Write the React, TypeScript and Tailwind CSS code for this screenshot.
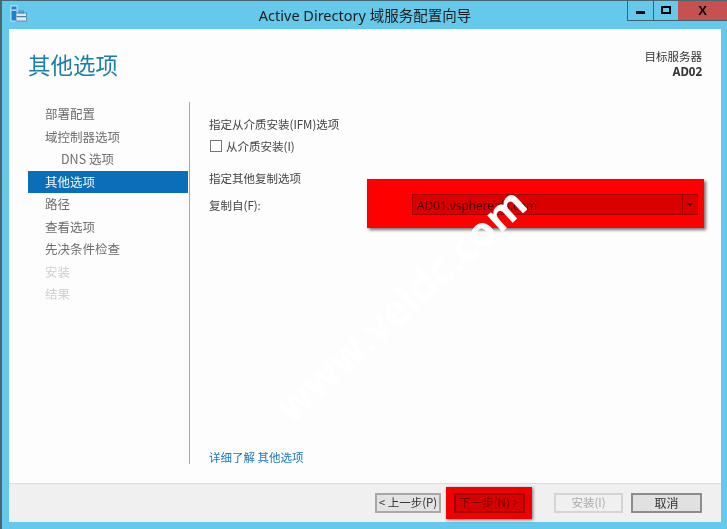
const items: [string, string][] = [
  ["部署配置", "text-[#6e6e6e] pl-[17px]"],
  ["域控制器选项", "text-[#6e6e6e] pl-[17px]"],
  ["DNS 选项", "text-[#6e6e6e] pl-[33px]"],
  ["其他选项", "bg-[#0a6fb8] text-[#f2f7fb] pl-[17px]"],
  ["路径", "text-[#6e6e6e] pl-[17px]"],
  ["查看选项", "text-[#6e6e6e] pl-[17px]"],
  ["先决条件检查", "text-[#6e6e6e] pl-[17px]"],
  ["安装", "text-[#cfcfcf] pl-[17px]"],
  ["结果", "text-[#cfcfcf] pl-[17px]"],
];

const font = "font-['Noto_Sans_CJK_SC','Noto_Sans',sans-serif]";

export default function App() {
  return (
    <div className={`relative w-[727px] h-[529px] overflow-hidden bg-[#64c9ea] ${font} border-l-2 border-t border-[#4a6670] blur-[0.35px]`}>
      {/* title bar */}
      <div className="relative flex h-[28px]">
        <svg className="ml-[8px] mt-[4px] shrink-0" width="18" height="18" viewBox="0 0 18 18">
          <rect x="1" y="1" width="6" height="15" fill="#1c7fd0" stroke="#e8f6ff" strokeWidth="0.8" />
          <rect x="1.5" y="4.5" width="5" height="1.2" fill="#e8f6ff" />
          <rect x="6" y="8" width="10.5" height="8" fill="#dfe8ee" stroke="#4f7f9b" strokeWidth="0.8" />
          <rect x="9" y="6" width="4.5" height="2" fill="none" stroke="#4f7f9b" strokeWidth="0.8" />
          <rect x="6.5" y="11" width="9.5" height="1.2" fill="#4f7f9b" />
        </svg>
        <div className="ml-[-18px] w-[710px] text-center text-[14.5px] leading-[28px] text-[#1c1c1c] font-['Noto_Sans','Noto_Sans_CJK_SC',sans-serif]">
          Active Directory 域服务配置向导
        </div>
        <div className="absolute right-0 top-[-1px] flex h-[21px] border-b border-[#44606a] border-l">
          <div className="flex w-[26px] items-center justify-center border-r border-[#44606a]">
            <div className="mt-[4px] h-[3px] w-[9px] bg-black" />
          </div>
          <div className="flex w-[24px] items-center justify-center">
            <div className="h-[8px] w-[10px] border-2 border-black" />
          </div>
          <div className="flex w-[49px] items-center justify-center bg-[#c75050] text-[13px] font-bold leading-none text-black font-['Liberation_Sans',sans-serif]">
            X
          </div>
        </div>
      </div>

      {/* client area */}
      <div className="ml-[7px] flex h-[493px] w-[712px] flex-col bg-[#fdfdfd]">
        <div className="flex h-[73px] shrink-0">
          <h1 className="ml-[19px] mt-[18px] text-[22.5px] leading-[34px] text-[#1c7ea8] font-normal">其他选项</h1>
          <div className="ml-auto mr-[19px] mt-[20px] text-right text-[11.5px] leading-[15px] text-[#333]">
            <div>目标服务器</div>
            <div className="font-bold font-['Noto_Sans',sans-serif]">AD02</div>
          </div>
        </div>

        <div className="flex h-[362px] shrink-0">
          <nav className="ml-[19px] flex w-[160px] shrink-0 flex-col pt-[1px] text-[12.5px]">
            {items.map(([t, c]) => (
              <div key={t} className={`h-[22.5px] shrink-0 leading-[22px] ${c}`}>{t}</div>
            ))}
          </nav>
          <div className="ml-[1px] w-px bg-[#a8a8a8]" />
          <div className="flex flex-1 flex-col pl-[19px] text-[11.5px] text-[#444]">
            <div className="mt-[14px] leading-[16px]">指定从介质安装(IFM)选项</div>
            <label className="mt-[7px] flex h-[14px] items-center">
              <span className="ml-[1px] mr-[4px] h-[12px] w-[12px] border border-[#777] bg-white" />
              <span className="leading-[14px]">从介质安装(I)</span>
            </label>
            <div className="mt-[17px] leading-[16px]">指定其他复制选项</div>
            <div className="relative mt-[11px] leading-[16px]">
              复制自(F):
              <div className="absolute left-[158px] top-[-18px] flex h-[49px] w-[337px] items-start bg-[#ff0000] pl-[45px] pt-[15px] shadow-[2px_2px_3px_rgba(0,0,0,0.55)]">
                <div className="flex h-[21px] w-[286px] items-center border border-[#a00000] bg-[#da0000] text-[11.8px] text-[#4a0000]">
                  <span className="flex-1 pl-[4px] font-['Noto_Sans',sans-serif]">AD01.vsphere.ds.com</span>
                  <span className="flex h-full w-[15px] items-center justify-center border-l border-[#a00000]">
                    <span className="h-0 w-0 border-x-[3px] border-t-[3px] border-x-transparent border-t-[#400000]" />
                  </span>
                </div>
              </div>
            </div>
            <a className="mt-auto mb-[-1px] leading-[16px] text-[#1a76c2]">详细了解 其他选项</a>
          </div>
        </div>

        {/* footer */}
        <div className="mt-[19px] flex h-[39px] shrink-0 items-center border-t border-[#dcdcdc] bg-[#f0f0f0] pl-[366px] text-[11.5px]">
          <button className="mt-[-1px] flex h-[20px] w-[66px] items-center justify-center border-2 border-[#a8a8a8] bg-[#e3e3e3] text-[#333]">&lt; 上一步(P)</button>
          <div className="relative ml-[5px] mt-[-1px] flex h-[32px] w-[86px] items-center justify-center bg-[#f00000] shadow-[1px_1px_3px_rgba(0,0,0,0.5)]">
            <div className="flex h-[20px] w-[71px] items-center justify-center border-2 border-[#a00000] bg-[#d80000] text-[#6a0000]">下一步(N) &gt;</div>
          </div>
          <button className="ml-[22px] mt-[-1px] flex h-[20px] w-[69px] items-center justify-center border-2 border-[#d4d4d4] bg-[#f0f0f0] text-[#aaa]">安装(I)</button>
          <button className="ml-[8px] mt-[-1px] flex h-[20px] w-[71px] items-center justify-center border-2 border-[#8c8c8c] bg-[#e1e1e1] text-[12px] text-[#333]">取消</button>
        </div>
      </div>

      {/* watermark */}
      <div className="pointer-events-none absolute left-[398px] top-[303px] flex h-0 w-0 items-center justify-center">
        <span className="whitespace-nowrap rotate-[-42.4deg] text-[41px] font-bold leading-none text-white font-['Open_Sans',sans-serif]">
          www.veidc.com
        </span>
      </div>
    </div>
  );
}
